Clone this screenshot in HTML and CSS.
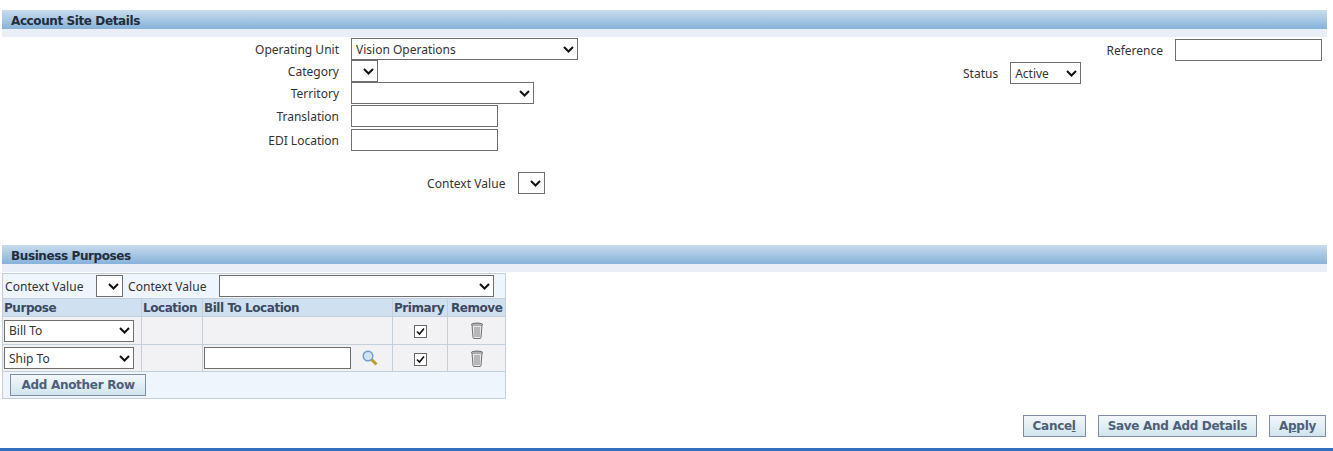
FILE: index.html
```html
<!DOCTYPE html>
<html lang="en">
<head>
  <meta charset="UTF-8" />
  <title>Account Site Details</title>
  <link rel="stylesheet" href="styles.css">
</head>
<body>
  <h2 class="section-bar">Account Site Details</h2>

  <section class="site-form">
    <div class="form-left">
      <label class="lbl">Operating Unit</label>
      <select class="w-227"><option>Vision Operations</option></select>
      <label class="lbl">Category</label>
      <select class="w-27"><option></option></select>
      <label class="lbl">Territory</label>
      <select class="w-183"><option></option></select>
      <label class="lbl">Translation</label>
      <input class="w-147" type="text" />
      <label class="lbl">EDI Location</label>
      <input class="w-147" type="text" />
      <div class="context-row">
        <label class="lbl ctx-lbl">Context Value</label>
        <select class="w-27"><option></option></select>
      </div>
    </div>
    <div class="form-right">
      <div class="ref-row">
        <label class="lbl">Reference</label>
        <input class="w-147" type="text" />
      </div>
      <div class="status-row">
        <label class="lbl">Status</label>
        <select class="w-71"><option>Active</option></select>
      </div>
    </div>
  </section>

  <h2 class="section-bar">Business Purposes</h2>

  <table class="purposes">
    <colgroup>
      <col class="c1"><col class="c2"><col class="c3"><col class="c4"><col class="c5">
    </colgroup>
    <tr class="toolbar">
      <td colspan="5">
        <div class="toolbar-in">
          <label class="lbl ctx-lbl">Context Value</label>
          <select class="w-27"><option></option></select>
          <label class="lbl ctx-lbl">Context Value</label>
          <select class="w-275"><option></option></select>
        </div>
      </td>
    </tr>
    <tr class="head">
      <th>Purpose</th><th>Location</th><th>Bill To Location</th><th>Primary</th><th class="th-remove">Remove</th>
    </tr>
    <tr class="row row-first">
      <td><select class="w-130"><option>Bill To</option></select></td>
      <td></td>
      <td></td>
      <td class="mid">
        <span class="check"><svg width="9" height="9" viewBox="0 0 9 9"><path d="M1 4.500 3.500 7 8 1.500" fill="none" stroke="#111" stroke-width="1.600"/></svg></span>
      </td>
      <td class="mid">
        <svg class="trash" width="14" height="17" viewBox="0 0 14 17"><path d="M2 3h10l-1 12.500q-.1 1-1 1H4q-.9 0-1-1z" fill="#e6e6e6" stroke="#707070"/><path d="M1 2.800q0-1.600 6-1.800 6 .2 6 1.800" fill="#b0b0b0" stroke="#6c6c6c"/><path d="M5 5v10M7 5v10M9 5v10" fill="none" stroke="#888"/></svg>
      </td>
    </tr>
    <tr class="row">
      <td><select class="w-130"><option>Ship To</option></select></td>
      <td></td>
      <td>
        <div class="lov">
          <input class="w-147" type="text" />
          <svg width="16" height="16" viewBox="0 0 16 16"><path d="M9.500 9.500 14.500 14.500" stroke="#b8a028" stroke-width="3" fill="none"/><circle cx="6" cy="6" r="4.800" fill="#cfe2f6" stroke="#6f9bc9" stroke-width="1.400"/></svg>
        </div>
      </td>
      <td class="mid">
        <span class="check"><svg width="9" height="9" viewBox="0 0 9 9"><path d="M1 4.500 3.500 7 8 1.500" fill="none" stroke="#111" stroke-width="1.600"/></svg></span>
      </td>
      <td class="mid">
        <svg class="trash" width="14" height="17" viewBox="0 0 14 17"><path d="M2 3h10l-1 12.500q-.1 1-1 1H4q-.9 0-1-1z" fill="#e6e6e6" stroke="#707070"/><path d="M1 2.800q0-1.600 6-1.800 6 .2 6 1.800" fill="#b0b0b0" stroke="#6c6c6c"/><path d="M5 5v10M7 5v10M9 5v10" fill="none" stroke="#888"/></svg>
      </td>
    </tr>
    <tr class="add-row">
      <td colspan="5"><button class="btn btn-add">Add Another Row</button></td>
    </tr>
  </table>

  <div class="actions">
    <button class="btn">Cance<u>l</u></button>
    <button class="btn">Save And Add Details</button>
    <button class="btn">A<u>p</u>ply</button>
  </div>

  <div class="bottom-line"></div>
</body>
</html>
```

FILE: styles.css
```css
body {
  margin: 0;
  font-family: 'Noto Sans', sans-serif;
  font-size: 12px;
  color: #333;
  background: #fff;
  height: 451px;
  overflow: hidden;
}

.section-bar {
  margin: 10px 6px 0 2px;
  height: 16px;
  padding: 3px 0 0 9px;
  font-family: 'DejaVu Sans', sans-serif;
  font-size: 12px;
  font-weight: bold;
  letter-spacing: -0.4px;
  line-height: 16px;
  color: #222c3a;
  background: linear-gradient(#c9dcee, #86b2d9);
  border-bottom: 8px solid #e9eef7;
}

select,
input {
  box-sizing: border-box;
  height: 22px;
  margin: 0;
  border: 1px solid #6e6e6e;
  background-color: #fff;
  font-family: 'Noto Sans', sans-serif;
  font-size: 12px;
  color: #333;
  border-radius: 0;
}

select {
  appearance: none;
  padding: 0 4px;
  background-image: url("data:image/svg+xml,%3Csvg xmlns='http://www.w3.org/2000/svg' width='11' height='7'%3E%3Cpath d='M1 1l4.500 4.500L10 1' fill='none' stroke='%23111' stroke-width='2'/%3E%3C/svg%3E");
  background-repeat: no-repeat;
  background-position: right 3px center;
}

.w-27 { width: 27px; }
.w-71 { width: 71px; }
.w-130 { width: 130px; }
.w-147 { width: 147px; }
.w-183 { width: 183px; }
.w-227 { width: 227px; }
.w-275 { width: 275px; }

.lbl {
  white-space: nowrap;
  text-align: right;
  line-height: 20px;
  padding-top: 2px;
}

.ctx-lbl {
  display: block;
  width: 79px;
  text-align: left;
  letter-spacing: 0.05px;
}

.site-form {
  display: flex;
  height: 197px;
  padding-top: 1px;
}

.form-left {
  display: grid;
  grid-template-columns: 339px 227px;
  grid-template-rows: 22px 22px 22px 23px 24px auto;
  column-gap: 12px;
  align-items: end;
  align-content: start;
  justify-items: start;
}

.form-left > .lbl {
  justify-self: end;
}

.context-row {
  grid-column: 1 / 3;
  display: flex;
  align-items: center;
  gap: 12px;
  margin: 21px 0 0 427px;
}

.form-right {
  margin-left: 368px;
  flex: 1;
  padding-top: 1px;
}

.ref-row,
.status-row {
  display: flex;
  align-items: center;
  gap: 12px;
}

.ref-row {
  justify-content: flex-end;
  margin-right: 11px;
}

.status-row {
  margin-top: 1px;
  margin-left: 17px;
}

.purposes {
  margin: 1px 0 0 2px;
  width: 504px;
  table-layout: fixed;
  border-collapse: collapse;
  border: 1px solid #c5cfdc;
  background: #eff5fd;
}

.purposes td,
.purposes th {
  padding: 0;
}

.c1 { width: 139px; }
.c2 { width: 61px; }
.c3 { width: 190px; }
.c4 { width: 55px; }

.toolbar td {
  height: 24px;
}

.toolbar-in {
  display: flex;
  align-items: center;
  gap: 5px;
  padding-left: 2px;
}

.toolbar-in .ctx-lbl {
  margin-right: 7px;
}

.purposes .head th {
  height: 15px;
  background: #cfe0f1;
  border-left: 1px solid #c5cfdc;
  border-top: 1px solid #c5cfdc;
  font-family: 'DejaVu Sans', sans-serif;
  font-size: 12px;
  line-height: 15px;
  letter-spacing: -0.45px;
  text-align: left;
  color: #3a4a60;
  padding: 2px 0 0 1px;
}

.purposes .head .th-remove {
  padding-left: 3px;
}

.row td {
  height: 26px;
  background: #f2f2f4;
  border: 1px solid #c5cfdc;
  padding-left: 1px;
}

.row-first td {
  height: 27px;
}

.row td.mid {
  text-align: center;
  padding-left: 0;
  vertical-align: middle;
}

.row select {
  display: block;
}

.lov {
  display: flex;
  align-items: center;
  gap: 11px;
}

.check {
  display: inline-flex;
  align-items: center;
  justify-content: center;
  width: 13px;
  height: 13px;
  box-sizing: border-box;
  border: 1px solid #666;
  background: #fff;
  vertical-align: middle;
}

.trash {
  display: block;
  margin: 0 auto;
}

.purposes .add-row td {
  height: 24px;
  padding: 2px 0 0 7px;
  vertical-align: top;
}

.btn {
  box-sizing: border-box;
  height: 22px;
  padding: 0 9px;
  border: 1px solid #7f8ea6;
  border-radius: 0;
  background: linear-gradient(#f3f7fb, #cfe5ee);
  font-family: 'DejaVu Sans', sans-serif;
  font-size: 12px;
  font-weight: bold;
  letter-spacing: -0.3px;
  color: #4e5f78;
}

.btn-add {
  padding: 0 10.500px;
}

.actions {
  display: flex;
  justify-content: flex-end;
  gap: 12px;
  margin: 16px 7px 0 0;
}

.bottom-line {
  height: 3px;
  margin-top: 11px;
  background: #3270bd;
}
```
